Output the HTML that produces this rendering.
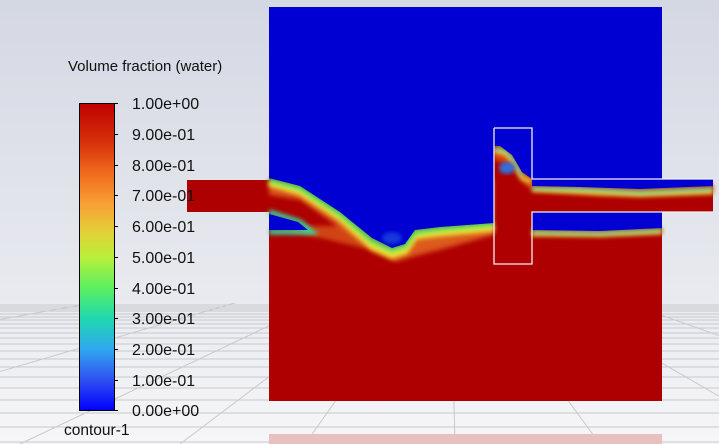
<!DOCTYPE html>
<html><head><style>
html,body{margin:0;padding:0;}
body{width:719px;height:444px;overflow:hidden;background:linear-gradient(#d4d8e3 0%,#e6e8ee 60%,#f6f6f8 100%);font-family:"Liberation Sans",sans-serif;}
svg{position:absolute;left:0;top:0;}
</style></head><body>
<svg width="719" height="444" viewBox="0 0 719 444">
<defs>
<linearGradient id="cb" x1="0" y1="0" x2="0" y2="1">
<stop offset="0" stop-color="#c00000"/>
<stop offset="0.12" stop-color="#d52e0a"/>
<stop offset="0.22" stop-color="#f0661c"/>
<stop offset="0.33" stop-color="#f7a234"/>
<stop offset="0.42" stop-color="#e2d138"/>
<stop offset="0.5" stop-color="#b9f03a"/>
<stop offset="0.6" stop-color="#5cf060"/>
<stop offset="0.7" stop-color="#1fd8b0"/>
<stop offset="0.8" stop-color="#30a8f0"/>
<stop offset="0.9" stop-color="#3050f0"/>
<stop offset="1" stop-color="#0000ff"/>
</linearGradient>
<clipPath id="floor"><rect x="0" y="303" width="719" height="141"/></clipPath>
<filter id="bl"><feGaussianBlur stdDeviation="2"/></filter>
</defs>
<g stroke="#c9c9cc" stroke-width="1" fill="none">
<path d="M0 305H719M0 307H719M0 309H719M0 311H719M0 314H719M0 317H719M0 320H719M0 324H719M0 328H719M0 333H719M0 338H719M0 344H719M0 351H719M0 359H719M0 367H719M0 377H719M0 388H719M0 400H719M0 413H719M0 427H719M0 442H719"/>
<g clip-path="url(#floor)">
<path d="M450 240L305 444M450 240L180 444M450 240L20 444M450 240L-200 430M450 240L-400 390M450 240L455 444M450 240L600 444M450 240L760 420M450 240L900 400"/>
</g>
</g>
<rect x="269" y="7" width="393" height="394" fill="#ae0000"/>
<rect x="187" y="180" width="82" height="32" fill="#ae0000"/>
<rect x="532" y="179" width="181" height="33" fill="#ae0000"/>
<rect x="269" y="434" width="393" height="10" fill="#e8c0c0"/>
<g filter="url(#bl)">
<path d="M269 195 L300 200 L340 228 L372 252 L395 262 L420 255 L440 250 L494 235 L494 180 L269 180Z" fill="#d8501a"/>
<path d="M269 226 L330 240 L372 250 L395 258 L420 250 L494 232 L494 226Z" fill="#e06020" opacity="0.7"/>
<path d="M532 190 L600 196 L713 194 L713 184 L532 184Z" fill="#d84010"/>
<path d="M532 236 L662 234 L662 228 L532 228Z" fill="#d84010"/>
<path d="M494 160 L510 165 L525 185 L532 190 L532 150 L494 140Z" fill="#d84010"/>
</g>
<g filter="url(#bl)" fill="none">
<path d="M269 183 L300 192 L340 218 L372 246 L392 255 L405 251 L415 236 L440 233 L494 228" stroke="#e9e030" stroke-width="7"/>
<path d="M269 180 L300 188 L340 214 L372 241 L392 250 L405 246 L415 232 L440 229 L494 224" stroke="#20e060" stroke-width="5"/>
<path d="M269 212 L300 222 L312 232 L269 232" stroke="#30d8a0" stroke-width="5"/>
<path d="M532 190 L580 192 L640 195 L713 192" stroke="#e0d030" stroke-width="4"/>
<path d="M532 188 L580 189 L640 192 L713 189" stroke="#20d8a0" stroke-width="3"/>
<path d="M532 234 L600 235 L662 232" stroke="#e0d030" stroke-width="4"/>
<path d="M532 232 L600 233 L662 230" stroke="#20d8a0" stroke-width="3"/>
<path d="M494 152 C505 150 512 158 522 178 L532 182" stroke="#e0d030" stroke-width="4"/>
<path d="M494 150 C505 146 512 155 522 176" stroke="#20d8a0" stroke-width="3"/>
</g>
<path d="M269 7 H662 V179 H532 L522 172 L512 155 L500 146 L494 146 V223 L440 227 L415 230 L405 244 L392 248 L372 238 L340 212 L300 186 L269 178Z" fill="#0000d2"/>
<path d="M269 214 L298 222 L308 230 L269 230Z" fill="#0000d2"/>
<path d="M532 212 H662 V228 L600 231 L532 230Z" fill="#0000d2"/>
<path d="M532 179 H713 V186 L640 189 L580 187 L532 186Z" fill="#0000d2"/>
<ellipse cx="507" cy="168" rx="8" ry="6" fill="#3070e0" filter="url(#bl)"/>
<ellipse cx="392" cy="238" rx="10" ry="6" fill="#2060e0" opacity="0.6" filter="url(#bl)"/>
<path d="M494 128 H532 V179 H713 M713 212 H532 V264 H494 V128" fill="none" stroke="#f0f0f0" stroke-width="1.3"/>
<rect x="79.5" y="103.5" width="35" height="307" fill="url(#cb)" stroke="#000" stroke-width="1"/>
<g stroke="#000" stroke-width="1">
<path d="M114 103.5h4M114 134.5h4M114 165.5h4M114 195.5h4M114 226.5h4M114 257.5h4M114 288.5h4M114 318.5h4M114 349.5h4M114 380.5h4M114 410.5h4"/>
</g>
<g font-family="Liberation Sans, sans-serif" font-size="16" fill="#111">
<text x="132" y="109">1.00e+00</text>
<text x="132" y="140">9.00e-01</text>
<text x="132" y="171">8.00e-01</text>
<text x="132" y="201">7.00e-01</text>
<text x="132" y="232">6.00e-01</text>
<text x="132" y="263">5.00e-01</text>
<text x="132" y="294">4.00e-01</text>
<text x="132" y="324">3.00e-01</text>
<text x="132" y="355">2.00e-01</text>
<text x="132" y="386">1.00e-01</text>
<text x="132" y="416">0.00e+00</text>
<text x="64" y="435" font-size="15.5">contour-1</text>
<text x="68" y="71" font-size="15">Volume fraction (water)</text>
</g>
</svg>
</body></html>
